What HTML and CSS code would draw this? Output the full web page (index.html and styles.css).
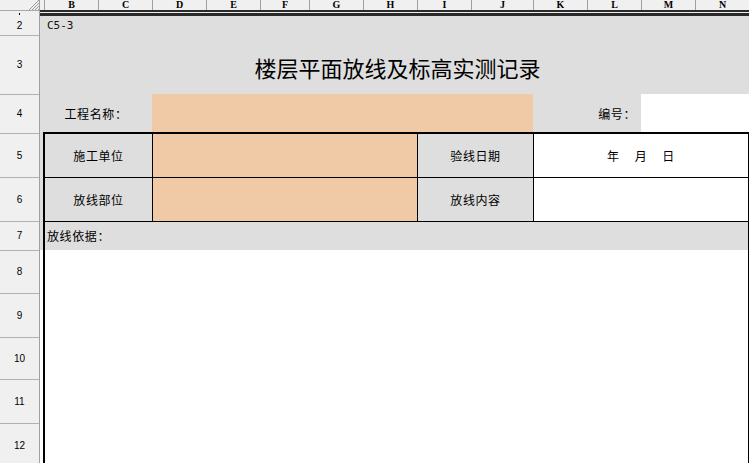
FILE: index.html
```html
<!DOCTYPE html>
<html lang="zh">
<head>
<meta charset="utf-8">
<title>楼层平面放线及标高实测记录</title>
<link rel="stylesheet" href="styles.css">
</head>
<body>
<div class="app">
  <div class="colhead">
    <div class="corner">
      <svg width="13" height="10" viewBox="0 0 13 10">
        <g stroke="#9a9a9a" stroke-width="1">
          <line x1="3" y1="10" x2="13" y2="0"/>
          <line x1="6" y1="10" x2="13" y2="3"/>
          <line x1="9" y1="10" x2="13" y2="6"/>
          <line x1="12" y1="10" x2="13" y2="9"/>
        </g>
      </svg>
    </div>
    <div class="ch a"></div>
    <div class="ch">B</div>
    <div class="ch">C</div>
    <div class="ch">D</div>
    <div class="ch">E</div>
    <div class="ch f">F</div>
    <div class="ch">G</div>
    <div class="ch">H</div>
    <div class="ch">I</div>
    <div class="ch j">J</div>
    <div class="ch">K</div>
    <div class="ch">L</div>
    <div class="ch">M</div>
    <div class="ch">N</div>
  </div>
  <div class="main">
    <div class="rowhead">
      <div class="rh r1"><span class="dot"></span></div>
      <div class="rh r2">2</div>
      <div class="rh r3">3</div>
      <div class="rh r4">4</div>
      <div class="rh r5">5</div>
      <div class="rh r6">6</div>
      <div class="rh r7">7</div>
      <div class="rh r8">8</div>
      <div class="rh r9">9</div>
      <div class="rh r10">10</div>
      <div class="rh r11">11</div>
      <div class="rh r12">12</div>
    </div>
    <div class="sheet">
      <div class="freeze"></div>
      <div class="code">C5-3</div>
      <div class="title">楼层平面放线及标高实测记录</div>
      <div class="projrow">
        <div class="cell lbl">工程名称：</div>
        <div class="cell peach"></div>
        <div class="cell lbl right">编号：</div>
        <div class="cell white"></div>
      </div>
      <div class="frame">
        <div class="trow">
          <div class="tc lbl">施工单位</div>
          <div class="tc peach"></div>
          <div class="tc lbl">验线日期</div>
          <div class="tc white date"><span>年</span><span>月</span><span>日</span></div>
        </div>
        <div class="trow">
          <div class="tc lbl">放线部位</div>
          <div class="tc peach"></div>
          <div class="tc lbl">放线内容</div>
          <div class="tc white"></div>
        </div>
        <div class="basis">放线依据：</div>
      </div>
      <div class="blank"><div class="blank-frame"></div></div>
    </div>
  </div>
</div>
</body>
</html>
```
FILE: styles.css
```css
* { box-sizing: border-box; margin: 0; padding: 0; }
html, body { width: 749px; height: 463px; overflow: hidden; background: #fff; }
body { font-family: "Noto Sans CJK SC", "Noto Sans", sans-serif; color: #000; }

.app { display: flex; flex-direction: column; width: 749px; height: 463px; }

.colhead { display: flex; height: 10px; flex: none; background: #f0f0f0; overflow: hidden; }
.corner { width: 40px; flex: none; border-right: 1px solid #a0a0a0; display: flex; justify-content: flex-end; }
.ch {
  width: 54px; flex: none; border-right: 1px solid #a0a0a0;
  font: bold 10px/10px "Liberation Serif", serif; text-align: center; color: #000;
}
.ch.a { width: 5px; }
.ch.f { width: 49px; }
.ch.j { width: 62px; }

.main { display: flex; flex: 1; min-height: 0; }

.rowhead {
  width: 40px; flex: none; display: flex; flex-direction: column;
  background: #f0f0f0; border-right: 1px solid #a0a0a0;
}
.rh {
  flex: none; display: flex; align-items: center; justify-content: center;
  border-bottom: 1px solid #b0b0b0;
  font: 10px/1 "Liberation Sans", sans-serif; color: #000;
}
.rh.r1 { height: 6px; border-top: 1px solid #a8a8a8; border-bottom: none; align-items: flex-start; }
.dot { display: block; width: 1px; height: 2px; background: #000; margin-top: 2px; }
.rh.r2 { height: 20px; }
.rh.r3 { height: 59px; }
.rh.r4 { height: 39px; }
.rh.r5 { height: 44px; }
.rh.r6 { height: 44px; }
.rh.r7 { height: 29px; }
.rh.r8 { height: 43px; }
.rh.r9 { height: 44px; }
.rh.r10 { height: 42px; }
.rh.r11 { height: 44px; }
.rh.r12 { height: 44px; }

.sheet { flex: 1; display: flex; flex-direction: column; background: #dedede; min-width: 0; }

.freeze {
  flex: none; height: 6px; background: #eeeeee;
  border-top: 2px solid #2a2a2a; border-bottom: 3px solid #2a2a2a;
}
.code {
  flex: none; height: 20px; padding-left: 7px;
  font: 11px/20px "DejaVu Sans Mono", monospace; color: #111;
}
.title {
  flex: none; height: 58px; padding-top: 4px; padding-left: 6px;
  font-size: 22px; line-height: 54px; text-align: center; color: #000;
}

.projrow {
  flex: none; height: 38px; display: grid;
  grid-template-columns: 112px 381px 108px 1fr;
}
.cell { display: flex; align-items: center; justify-content: center; font-size: 12px; letter-spacing: 0.6px; }
.cell.right { justify-content: flex-end; padding-right: 5px; }

.lbl { background: #dedede; }
.peach { background: #f0caa6; }
.white { background: #fff; }

.frame {
  flex: none; margin-left: 3px;
  border-left: 2px solid #000; border-right: 1px solid #000; border-top: 2px solid #000;
}
.trow {
  height: 44px; display: grid;
  grid-template-columns: 108px 265px 116px 1fr;
  border-bottom: 1px solid #000;
}
.tc {
  display: flex; align-items: center; justify-content: center;
  border-right: 1px solid #000; font-size: 12px; letter-spacing: 0.6px;
}
.tc:last-child { border-right: none; }
.date { gap: 15px; }

.basis {
  height: 28px; background: #dedede; padding-left: 2px;
  font-size: 12px; line-height: 28px; letter-spacing: 0.6px;
}

.blank { flex: 1; background: #fff; padding-left: 3px; display: flex; }
.blank-frame { flex: 1; border-left: 2px solid #000; border-right: 1px solid #000; }
```
